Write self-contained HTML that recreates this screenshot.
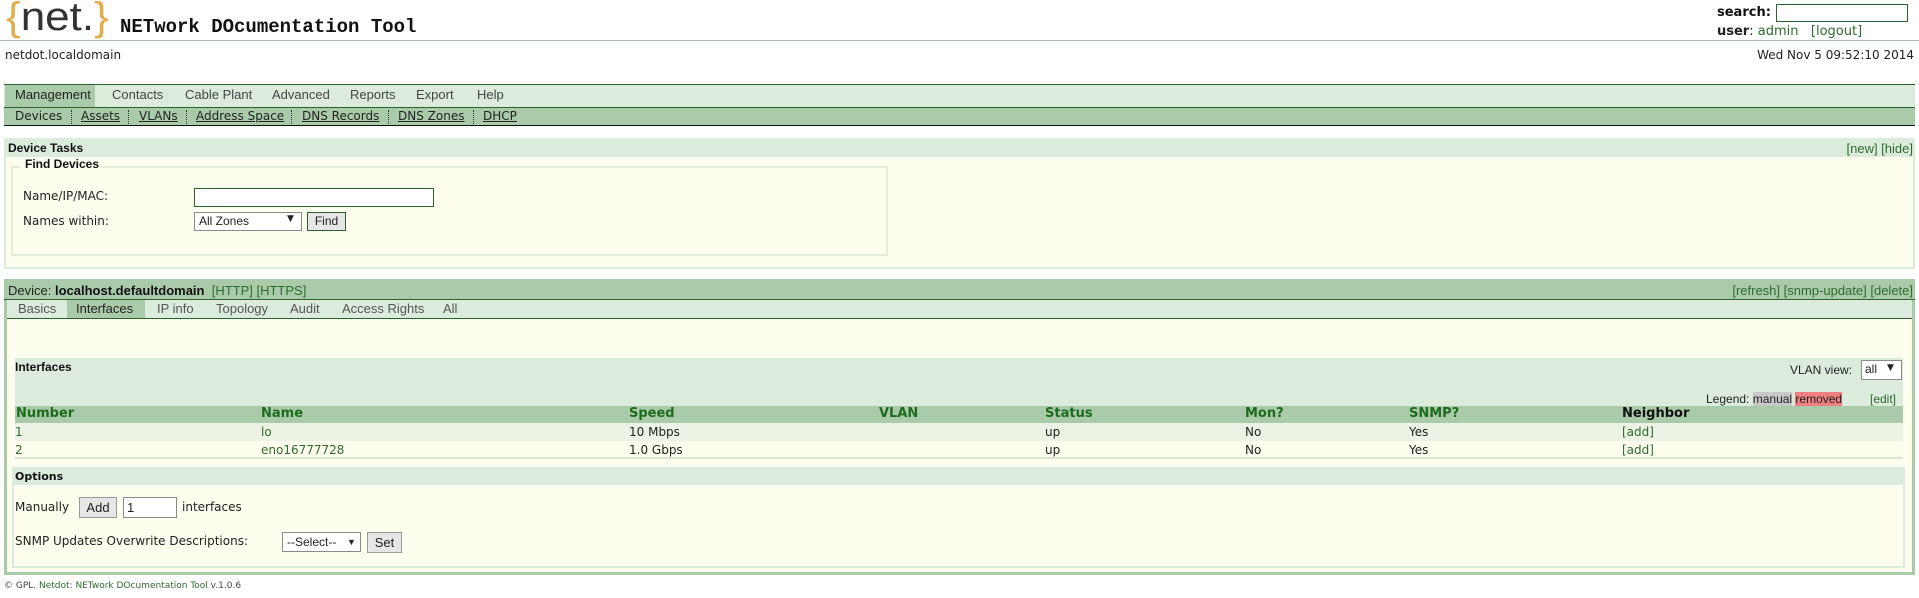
<!DOCTYPE html>
<html><head><meta charset="utf-8"><style>
*{box-sizing:border-box}
body{margin:0;width:1919px;height:598px;background:#fff;position:relative;overflow:hidden;font-family:"DejaVu Sans","Liberation Sans",sans-serif;font-size:12px;color:#222}
.a{position:absolute;white-space:nowrap}
.n{font-family:"Liberation Sans Narrow","Liberation Sans",sans-serif;font-size:13px}
.g{color:#2f6b2f}
.b{font-weight:bold}
.inp{position:absolute;background:#fff;border:1px solid #8a8a8a}
.btn{position:absolute;background:#e6e6e6;border:1px solid #9a9a9a;font-family:"Liberation Sans",sans-serif;font-size:13px;text-align:center}
.th{color:#1e6b1e;font-weight:bold;font-size:13px}
.sm{font-size:12px;color:#222;top:109px}
</style></head><body>
<!-- header -->
<div class="a" style="left:6px;top:-5px;font-family:'Liberation Sans',sans-serif;font-size:40px;color:#333;transform:scaleX(1.1);transform-origin:left"><span style="color:#e0b050">{</span>net.<span style="color:#e0b050">}</span></div>
<div class="a b" style="left:120px;top:16px;font-family:'Liberation Mono',monospace;font-size:19px;color:#111">NETwork DOcumentation Tool</div>
<div class="a b" style="left:1717px;top:5px;font-size:13px;color:#111">search:</div>
<div class="inp" style="left:1776px;top:4px;width:132px;height:18px;border:1px solid #2f5f2f"></div>
<div class="a" style="left:1717px;top:24px;font-size:13px"><b>user</b>: <span class="g">admin</span> &nbsp;&nbsp;<span class="g">[logout]</span></div>
<div class="a" style="left:0;top:40px;width:1919px;height:1px;background:#a8c0a8"></div>
<div class="a" style="left:5px;top:48px;font-size:12px">netdot.localdomain</div>
<div class="a" style="right:5px;top:48px;font-size:12px">Wed Nov 5 09:52:10 2014</div>
<!-- menu -->
<div class="a" style="left:4px;top:84px;width:1911px;height:24px;background:#dcecdc;border-top:1px solid #2f5f2f;border-bottom:1px solid #2f5f2f"></div>
<div class="a" style="left:5px;top:85px;width:90px;height:22px;background:#a9cba9"></div>
<div class="a n" style="left:15px;top:87px;color:#222">Management</div>
<div class="a n" style="left:112px;top:87px;color:#444">Contacts</div>
<div class="a n" style="left:185px;top:87px;color:#444">Cable Plant</div>
<div class="a n" style="left:272px;top:87px;color:#444">Advanced</div>
<div class="a n" style="left:350px;top:87px;color:#444">Reports</div>
<div class="a n" style="left:416px;top:87px;color:#444">Export</div>
<div class="a n" style="left:477px;top:87px;color:#444">Help</div>
<div class="a" style="left:4px;top:108px;width:1911px;height:18px;background:#a9cba9;border-bottom:1px solid #111"></div>
<div class="a sm" style="left:15px">Devices</div>
<div class="a sm" style="left:81px;text-decoration:underline">Assets</div>
<div class="a sm" style="left:139px;text-decoration:underline">VLANs</div>
<div class="a sm" style="left:196px;text-decoration:underline">Address Space</div>
<div class="a sm" style="left:302px;text-decoration:underline">DNS Records</div>
<div class="a sm" style="left:398px;text-decoration:underline">DNS Zones</div>
<div class="a sm" style="left:483px;text-decoration:underline">DHCP</div>
<div class="a" style="left:71px;top:110px;height:14px;border-left:1px dotted #333"></div>
<div class="a" style="left:128px;top:110px;height:14px;border-left:1px dotted #333"></div>
<div class="a" style="left:186px;top:110px;height:14px;border-left:1px dotted #333"></div>
<div class="a" style="left:291px;top:110px;height:14px;border-left:1px dotted #333"></div>
<div class="a" style="left:388px;top:110px;height:14px;border-left:1px dotted #333"></div>
<div class="a" style="left:473px;top:110px;height:14px;border-left:1px dotted #333"></div>
<!-- device tasks -->
<div class="a" style="left:4px;top:138px;width:1911px;height:131px;background:#fefeee;border:2px solid #dcecdc;border-top:none"></div>
<div class="a" style="left:4px;top:138px;width:1911px;height:19px;background:#dcecdc"></div>
<div class="a n b" style="left:8px;top:141px;font-size:12px;color:#111">Device Tasks</div>
<div class="a n g" style="right:6px;top:141px">[new] [hide]</div>
<div class="a" style="left:11px;top:166px;width:877px;height:90px;border:2px solid #e4ecd8"></div>
<div class="a n b" style="left:20px;top:157px;font-size:12px;background:#fefeee;padding:0 4px 0 5px;color:#111">Find Devices</div>
<div class="a" style="left:23px;top:189px;font-size:12px">Name/IP/MAC:</div>
<div class="inp" style="left:194px;top:188px;width:240px;height:19px;border:1px solid #2f5f2f"></div>
<div class="a" style="left:23px;top:214px;font-size:12px">Names within:</div>
<div class="inp" style="left:194px;top:212px;width:108px;height:19px"></div>
<div class="a n" style="left:199px;top:214px;font-size:12px">All Zones</div>
<div class="a" style="left:287px;top:214px;font-size:9px">▼</div>
<div class="btn" style="left:307px;top:212px;width:39px;height:19px;border-color:#2f5f2f;line-height:17px;font-size:12px">Find</div>
<!-- device panel -->
<div class="a" style="left:4px;top:279px;width:1911px;height:296px;background:#fefeee;border:3px solid #a9cba9;border-top:none"></div>
<div class="a" style="left:4px;top:279px;width:1911px;height:21px;background:#a9cba9;border-bottom:1px solid #2f5f2f"></div>
<div class="a n" style="left:8px;top:283px;font-size:13px;color:#222">Device: <b style="color:#111">localhost.defaultdomain</b> &nbsp;<span class="g">[HTTP] [HTTPS]</span></div>
<div class="a n g" style="right:6px;top:283px">[refresh] [snmp-update] [delete]</div>
<div class="a" style="left:7px;top:300px;width:1905px;height:19px;background:#dcecdc;border-bottom:1px solid #2f5f2f"></div>
<div class="a" style="left:67px;top:300px;width:78px;height:18px;background:#a9cba9"></div>
<div class="a n" style="left:18px;top:301px;color:#555">Basics</div>
<div class="a n" style="left:76px;top:301px;color:#222">Interfaces</div>
<div class="a n" style="left:157px;top:301px;color:#555">IP info</div>
<div class="a n" style="left:216px;top:301px;color:#555">Topology</div>
<div class="a n" style="left:290px;top:301px;color:#555">Audit</div>
<div class="a n" style="left:342px;top:301px;color:#555">Access Rights</div>
<div class="a n" style="left:443px;top:301px;color:#555">All</div>
<!-- interfaces -->
<div class="a" style="left:15px;top:358px;width:1888px;height:48px;background:#dcecdc"></div>
<div class="a n b" style="left:15px;top:360px;font-size:12px;color:#111">Interfaces</div>
<div class="a n" style="left:1790px;top:363px;font-size:12px">VLAN view:</div>
<div class="inp" style="left:1861px;top:360px;width:41px;height:20px"></div>
<div class="a n" style="left:1865px;top:362px;font-size:12px">all</div>
<div class="a" style="left:1887px;top:363px;font-size:9px">▼</div>
<div class="a n" style="left:1706px;top:392px;font-size:12px">Legend: <span style="background:#c8c8c8">manual</span> <span style="background:#f08080">removed</span></div>
<div class="a n g" style="left:1870px;top:392px;font-size:12px">[edit]</div>
<div class="a" style="left:15px;top:406px;width:1888px;height:17px;background:#a9cba9"></div>
<div class="a th" style="left:16px;top:406px">Number</div>
<div class="a th" style="left:261px;top:406px">Name</div>
<div class="a th" style="left:629px;top:406px">Speed</div>
<div class="a th" style="left:879px;top:406px">VLAN</div>
<div class="a th" style="left:1045px;top:406px">Status</div>
<div class="a th" style="left:1245px;top:406px">Mon?</div>
<div class="a th" style="left:1409px;top:406px">SNMP?</div>
<div class="a th" style="left:1622px;top:406px;color:#111">Neighbor</div>
<div class="a" style="left:15px;top:423px;width:1888px;height:18px;background:#ecf2e4"></div>
<div class="a" style="left:15px;top:441px;width:1888px;height:18px;background:#fefeee;border-bottom:2px solid #dde6d4"></div>
<div class="a g" style="left:15px;top:425px">1</div>
<div class="a g" style="left:261px;top:425px">lo</div>
<div class="a" style="left:629px;top:425px">10 Mbps</div>
<div class="a" style="left:1045px;top:425px">up</div>
<div class="a" style="left:1245px;top:425px">No</div>
<div class="a" style="left:1409px;top:425px">Yes</div>
<div class="a g" style="left:1622px;top:425px">[add]</div>
<div class="a g" style="left:15px;top:443px">2</div>
<div class="a g" style="left:261px;top:443px">eno16777728</div>
<div class="a" style="left:629px;top:443px">1.0 Gbps</div>
<div class="a" style="left:1045px;top:443px">up</div>
<div class="a" style="left:1245px;top:443px">No</div>
<div class="a" style="left:1409px;top:443px">Yes</div>
<div class="a g" style="left:1622px;top:443px">[add]</div>
<!-- options -->
<div class="a" style="left:12px;top:467px;width:1893px;height:101px;border:2px solid #dcecdc;border-top:none"></div>
<div class="a" style="left:12px;top:467px;width:1893px;height:18px;background:#dcecdc"></div>
<div class="a b" style="left:15px;top:470px;font-size:11px;color:#111">Options</div>
<div class="a" style="left:15px;top:500px">Manually</div>
<div class="btn" style="left:79px;top:497px;width:38px;height:21px;line-height:19px">Add</div>
<div class="inp" style="left:123px;top:497px;width:54px;height:21px;padding-left:3px;line-height:19px;font-family:'Liberation Sans',sans-serif;font-size:13px">1</div>
<div class="a" style="left:182px;top:500px">interfaces</div>
<div class="a" style="left:15px;top:534px">SNMP Updates Overwrite Descriptions:</div>
<div class="inp" style="left:282px;top:532px;width:79px;height:20px;padding-left:4px;line-height:18px;font-family:'Liberation Sans',sans-serif;font-size:12px">--Select-- <span style="font-size:9px;position:absolute;left:64px">▼</span></div>
<div class="btn" style="left:367px;top:532px;width:35px;height:21px;line-height:19px">Set</div>
<div class="a" style="left:4px;top:581px;font-size:9px;color:#444">© GPL. <span class="g">Netdot: NETwork DOcumentation Tool</span> v.1.0.6</div>
</body></html>
